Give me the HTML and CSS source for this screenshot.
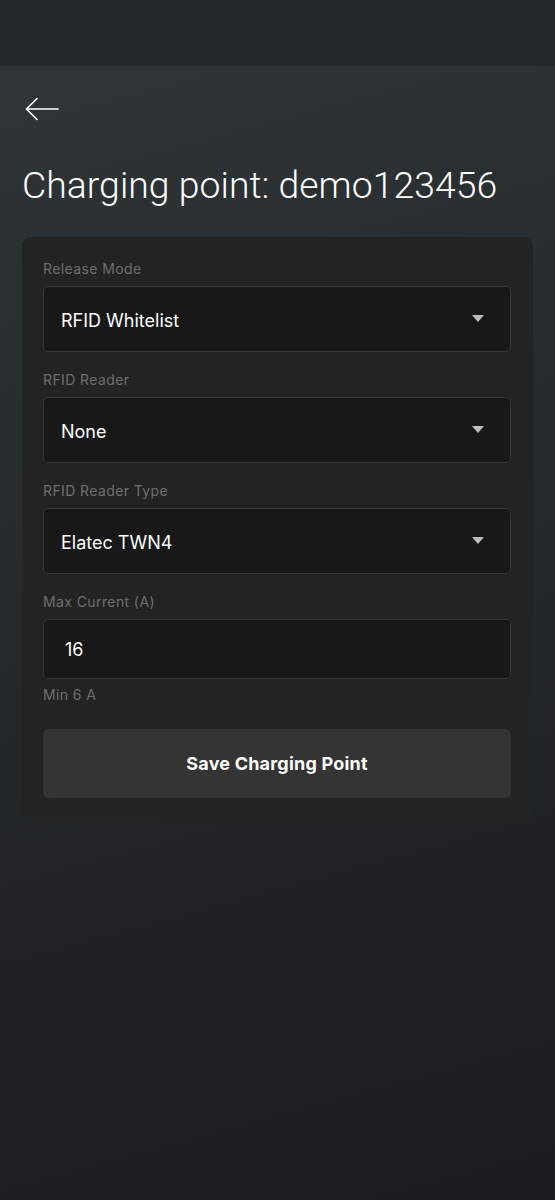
FILE: index.html
```html
<!DOCTYPE html>
<html lang="en">
<head>
<meta charset="utf-8">
<title>Charging point</title>
<link rel="stylesheet" href="styles.css">
</head>
<body>
<div class="topbar"></div>
<main class="page">
  <button class="back" aria-label="Back">
    <svg width="34" height="26" viewBox="0 0 34 26" fill="none" stroke="#fff" stroke-width="1.6" stroke-linecap="round" stroke-linejoin="round">
      <path d="M1.5 13 H33"/>
      <path d="M12 2.5 L1.5 13 L12 23.5"/>
    </svg>
  </button>
  <h1 class="title">Charging point: demo123456</h1>
  <section class="card">
    <div class="field">
      <label class="label">Release Mode</label>
      <div class="control select"><span class="value">RFID Whitelist</span><span class="caret"></span></div>
    </div>
    <div class="field">
      <label class="label">RFID Reader</label>
      <div class="control select"><span class="value">None</span><span class="caret"></span></div>
    </div>
    <div class="field">
      <label class="label">RFID Reader Type</label>
      <div class="control select"><span class="value">Elatec TWN4</span><span class="caret"></span></div>
    </div>
    <div class="field">
      <label class="label">Max Current (A)</label>
      <div class="control input"><span class="value">16</span></div>
      <div class="hint">Min 6 A</div>
    </div>
    <button class="save">Save Charging Point</button>
  </section>
</main>
</body>
</html>
```
FILE: styles.css
```css
* { box-sizing: border-box; }
html, body { margin: 0; padding: 0; }
body {
  min-height: 1200px;
  background: linear-gradient(165deg, #313638 0%, #272c2e 35%, #1f2325 70%, #1b1e20 100%);
  font-family: Inter, "Noto Sans", sans-serif;
  color: #fff;
}
.topbar {
  height: 66px;
  background: #23282a;
}
.page {
  padding: 30px 22px 0 22px;
}
.back {
  display: block;
  background: none;
  border: 0;
  padding: 0;
  margin: 0 0 0 3px;
  height: 26px;
  cursor: pointer;
}
.back svg { display: block; }
.title {
  margin: 41px 0 0 0;
  font-family: Roboto, "Liberation Sans", sans-serif;
  font-weight: 300;
  font-size: 37.3px;
  letter-spacing: 0.05px;
  line-height: 44px;
  color: #fff;
}
.card {
  margin-top: 30px;
  background: #232323;
  border-radius: 9px;
  padding: 23px 22px 24px 21px;
  display: flex;
  flex-direction: column;
  gap: 19px;
}
.field { display: flex; flex-direction: column; }
.label {
  font-size: 14px;
  line-height: 18px;
  letter-spacing: 0.4px;
  color: #6e6e6e;
  margin-bottom: 8px;
}
.control {
  background: #181818;
  border: 1px solid #363636;
  border-radius: 5px;
  display: flex;
  align-items: center;
}
.select { height: 66px; padding: 4px 26px 0 17px; }
.input { height: 60px; padding: 2px 0 0 21px; }
.value {
  flex: 1;
  font-size: 18px;
  line-height: 22px;
  color: #fff;
}
.caret {
  width: 0; height: 0;
  border-left: 6px solid transparent;
  border-right: 6px solid transparent;
  border-top: 7px solid #bdbdbd;
  margin-top: -6px;
}
.hint {
  margin-top: 7px;
  font-size: 14px;
  line-height: 18px;
  letter-spacing: 0.4px;
  color: #6e6e6e;
}
.save {
  margin-top: 6px;
  height: 69px;
  background: #343434;
  border: 0;
  border-radius: 6px;
  color: #fff;
  font-family: Inter, "Noto Sans", sans-serif;
  font-weight: 700;
  font-size: 18px;
  letter-spacing: 0.2px;
  cursor: pointer;
}
```
